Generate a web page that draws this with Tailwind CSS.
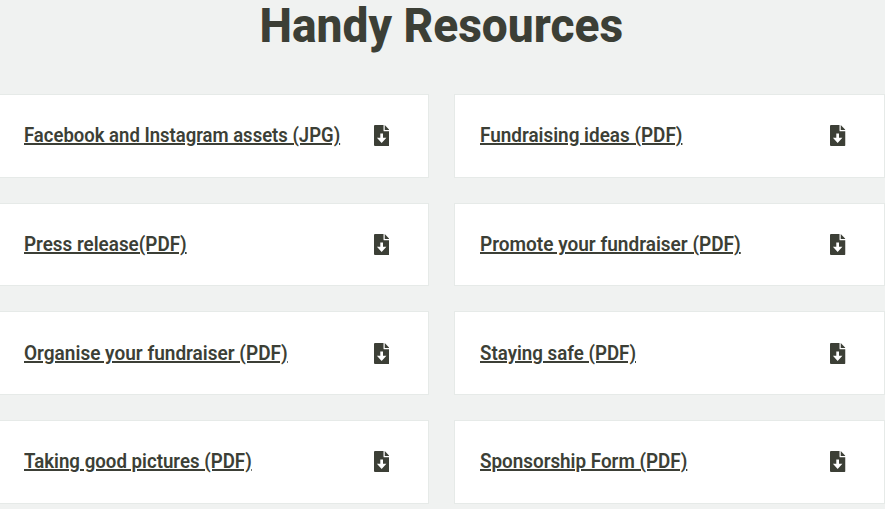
<!DOCTYPE html>
<html lang="en">
<head>
<meta charset="utf-8">
<title>Handy Resources</title>
<script src="https://cdn.jsdelivr.net/npm/@tailwindcss/browser@4"></script>
</head>
<body class="h-[509px] overflow-hidden bg-[#f0f2f1] text-[#3c3f36] font-['Roboto','Liberation_Sans',sans-serif]">
<svg class="hidden"><symbol id="dl" viewBox="0 0 15 20" preserveAspectRatio="none"><path fill="currentColor" fill-rule="evenodd" d="M1 0H9.2V5.2Q9.2 6 10 6H15V19Q15 20 14 20H1Q0 20 0 19V1Q0 0 1 0ZM6.1 8.2V12.2H2.8L7.4 17.2L12 12.2H8.7V8.2Z"/><path fill="currentColor" d="M10.4 0L15 4.7H10.4Z"/></symbol></svg>
<main>
<h1 class="flex h-[94px] justify-center text-[49px] leading-[52px] font-extrabold whitespace-nowrap"><span class="inline-block h-[52px] scale-x-[.94] -translate-x-px">Handy Resources</span></h1>
<ul class="-ml-[2px] grid w-[887px] grid-cols-[431px_431px] auto-rows-[83.67px] gap-[25px]">
<li class="flex items-center justify-between border border-[#e6eae8] bg-white pb-px pl-[25px] pr-[39px]"><a class="origin-left scale-x-[.925] text-[20px] leading-6 font-semibold whitespace-nowrap underline decoration-2 underline-offset-[1px]" href="#">Facebook and Instagram assets (JPG)</a><svg class="h-[21px] w-[15.5px] shrink-0"><use href="#dl"/></svg></li>
<li class="flex items-center justify-between border border-[#e6eae8] bg-white pb-px pl-[25px] pr-[38.5px]"><a class="origin-left scale-x-[.945] text-[20px] leading-6 font-semibold whitespace-nowrap underline decoration-2 underline-offset-[1px]" href="#">Fundraising ideas (PDF)</a><svg class="h-[21px] w-[15.5px] shrink-0"><use href="#dl"/></svg></li>
<li class="flex items-center justify-between border border-[#e6eae8] bg-white pl-[25px] pr-[39px]"><a class="origin-left scale-x-[.943] text-[20px] leading-6 font-semibold whitespace-nowrap underline decoration-2 underline-offset-[1px]" href="#">Press release(PDF)</a><svg class="h-[21px] w-[15.5px] shrink-0"><use href="#dl"/></svg></li>
<li class="flex items-center justify-between border border-[#e6eae8] bg-white pl-[25px] pr-[38.5px]"><a class="origin-left scale-x-[.951] text-[20px] leading-6 font-semibold whitespace-nowrap underline decoration-2 underline-offset-[1px]" href="#">Promote your fundraiser (PDF)</a><svg class="h-[21px] w-[15.5px] shrink-0"><use href="#dl"/></svg></li>
<li class="flex items-center justify-between border border-[#e6eae8] bg-white pl-[25px] pr-[39px]"><a class="origin-left scale-x-[.951] text-[20px] leading-6 font-semibold whitespace-nowrap underline decoration-2 underline-offset-[1px]" href="#">Organise your fundraiser (PDF)</a><svg class="h-[21px] w-[15.5px] shrink-0"><use href="#dl"/></svg></li>
<li class="flex items-center justify-between border border-[#e6eae8] bg-white pl-[25px] pr-[38.5px]"><a class="origin-left scale-x-[.936] text-[20px] leading-6 font-semibold whitespace-nowrap underline decoration-2 underline-offset-[1px]" href="#">Staying safe (PDF)</a><svg class="h-[21px] w-[15.5px] shrink-0"><use href="#dl"/></svg></li>
<li class="flex items-center justify-between border border-[#e6eae8] bg-white pb-px pl-[25px] pr-[39px]"><a class="origin-left scale-x-[.934] text-[20px] leading-6 font-semibold whitespace-nowrap underline decoration-2 underline-offset-[1px]" href="#">Taking good pictures (PDF)</a><svg class="h-[21px] w-[15.5px] shrink-0"><use href="#dl"/></svg></li>
<li class="flex items-center justify-between border border-[#e6eae8] bg-white pb-px pl-[25px] pr-[38.5px]"><a class="origin-left scale-x-[.942] text-[20px] leading-6 font-semibold whitespace-nowrap underline decoration-2 underline-offset-[1px]" href="#">Sponsorship Form (PDF)</a><svg class="h-[21px] w-[15.5px] shrink-0"><use href="#dl"/></svg></li>
</ul>
</main>
</body>
</html>
